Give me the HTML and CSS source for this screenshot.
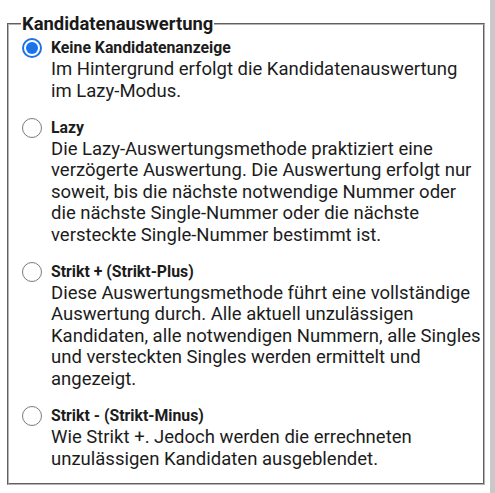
FILE: index.html
```html
<!DOCTYPE html>
<html lang="de">
<head>
<meta charset="utf-8">
<link rel="stylesheet" href="styles.css">
</head>
<body>
<div class="page">
  <form class="main">
    <fieldset class="group">
      <legend class="legend">Kandidatenauswertung</legend>
      <label class="option">
        <span class="radio checked"></span>
        <span class="body">
          <span class="title">Keine Kandidatenanzeige</span>
          <span class="desc">Im Hintergrund erfolgt die Kandidatenauswertung im Lazy-Modus.</span>
        </span>
      </label>
      <label class="option">
        <span class="radio"></span>
        <span class="body">
          <span class="title">Lazy</span>
          <span class="desc">Die Lazy-Auswertungsmethode praktiziert eine verzögerte Auswertung. Die Auswertung erfolgt nur soweit, bis die nächste notwendige Nummer oder die nächste Single-Nummer oder die nächste versteckte Single-Nummer bestimmt ist.</span>
        </span>
      </label>
      <label class="option">
        <span class="radio"></span>
        <span class="body">
          <span class="title">Strikt + (Strikt-Plus)</span>
          <span class="desc">Diese Auswertungsmethode führt eine vollständige Auswertung durch. Alle aktuell unzulässigen Kandidaten, alle notwendigen Nummern, alle Singles und versteckten Singles werden ermittelt und angezeigt.</span>
        </span>
      </label>
      <label class="option">
        <span class="radio"></span>
        <span class="body">
          <span class="title">Strikt - (Strikt-Minus)</span>
          <span class="desc">Wie Strikt +. Jedoch werden die errechneten unzulässigen Kandidaten ausgeblendet.</span>
        </span>
      </label>
    </fieldset>
  </form>
  <div class="scrollbar"></div>
</div>
</body>
</html>
```
FILE: styles.css
```css
html, body {
  margin: 0;
  padding: 0;
  background: #ffffff;
}
body {
  font-family: Roboto, "Noto Sans", sans-serif;
  color: #1c1c1c;
}
.page {
  display: flex;
  height: 493px;
  overflow: hidden;
}
.main {
  flex: 1;
  display: flex;
  padding: 13px 5px 8px 7px;
}
.group {
  flex: 1;
  margin: 0;
  min-width: 0;
  box-sizing: border-box;
  border: 2px groove #b4b4b4;
  padding: 3px 2px 0 13px;
  display: flex;
  flex-direction: column;
  gap: 15.7px;
}
.legend {
  font-weight: 700;
  font-size: 18.4px;
  line-height: 22px;
  padding: 0 1px;
  margin-left: -1px;
  color: #1a1a1a;
}
.option {
  display: flex;
  gap: 9px;
  align-items: flex-start;
}
.radio {
  flex: none;
  width: 20px;
  height: 20px;
  box-sizing: border-box;
  border: 1.5px solid #7a7a7a;
  border-radius: 50%;
  position: relative;
}
.radio.checked {
  border: 2px solid #1a73e8;
}
.radio.checked::after {
  content: "";
  position: absolute;
  left: 2px;
  top: 2px;
  width: 12px;
  height: 12px;
  border-radius: 50%;
  background: #1a73e8;
}
.body {
  display: flex;
  flex-direction: column;
  gap: 2px;
  min-width: 0;
}
.title {
  font-weight: 700;
  font-size: 15.8px;
  line-height: 19px;
}
.desc {
  font-size: 18.5px;
  line-height: 21.5px;
}
.scrollbar {
  flex: none;
  width: 5px;
  background: #c9c9c9;
}
```
